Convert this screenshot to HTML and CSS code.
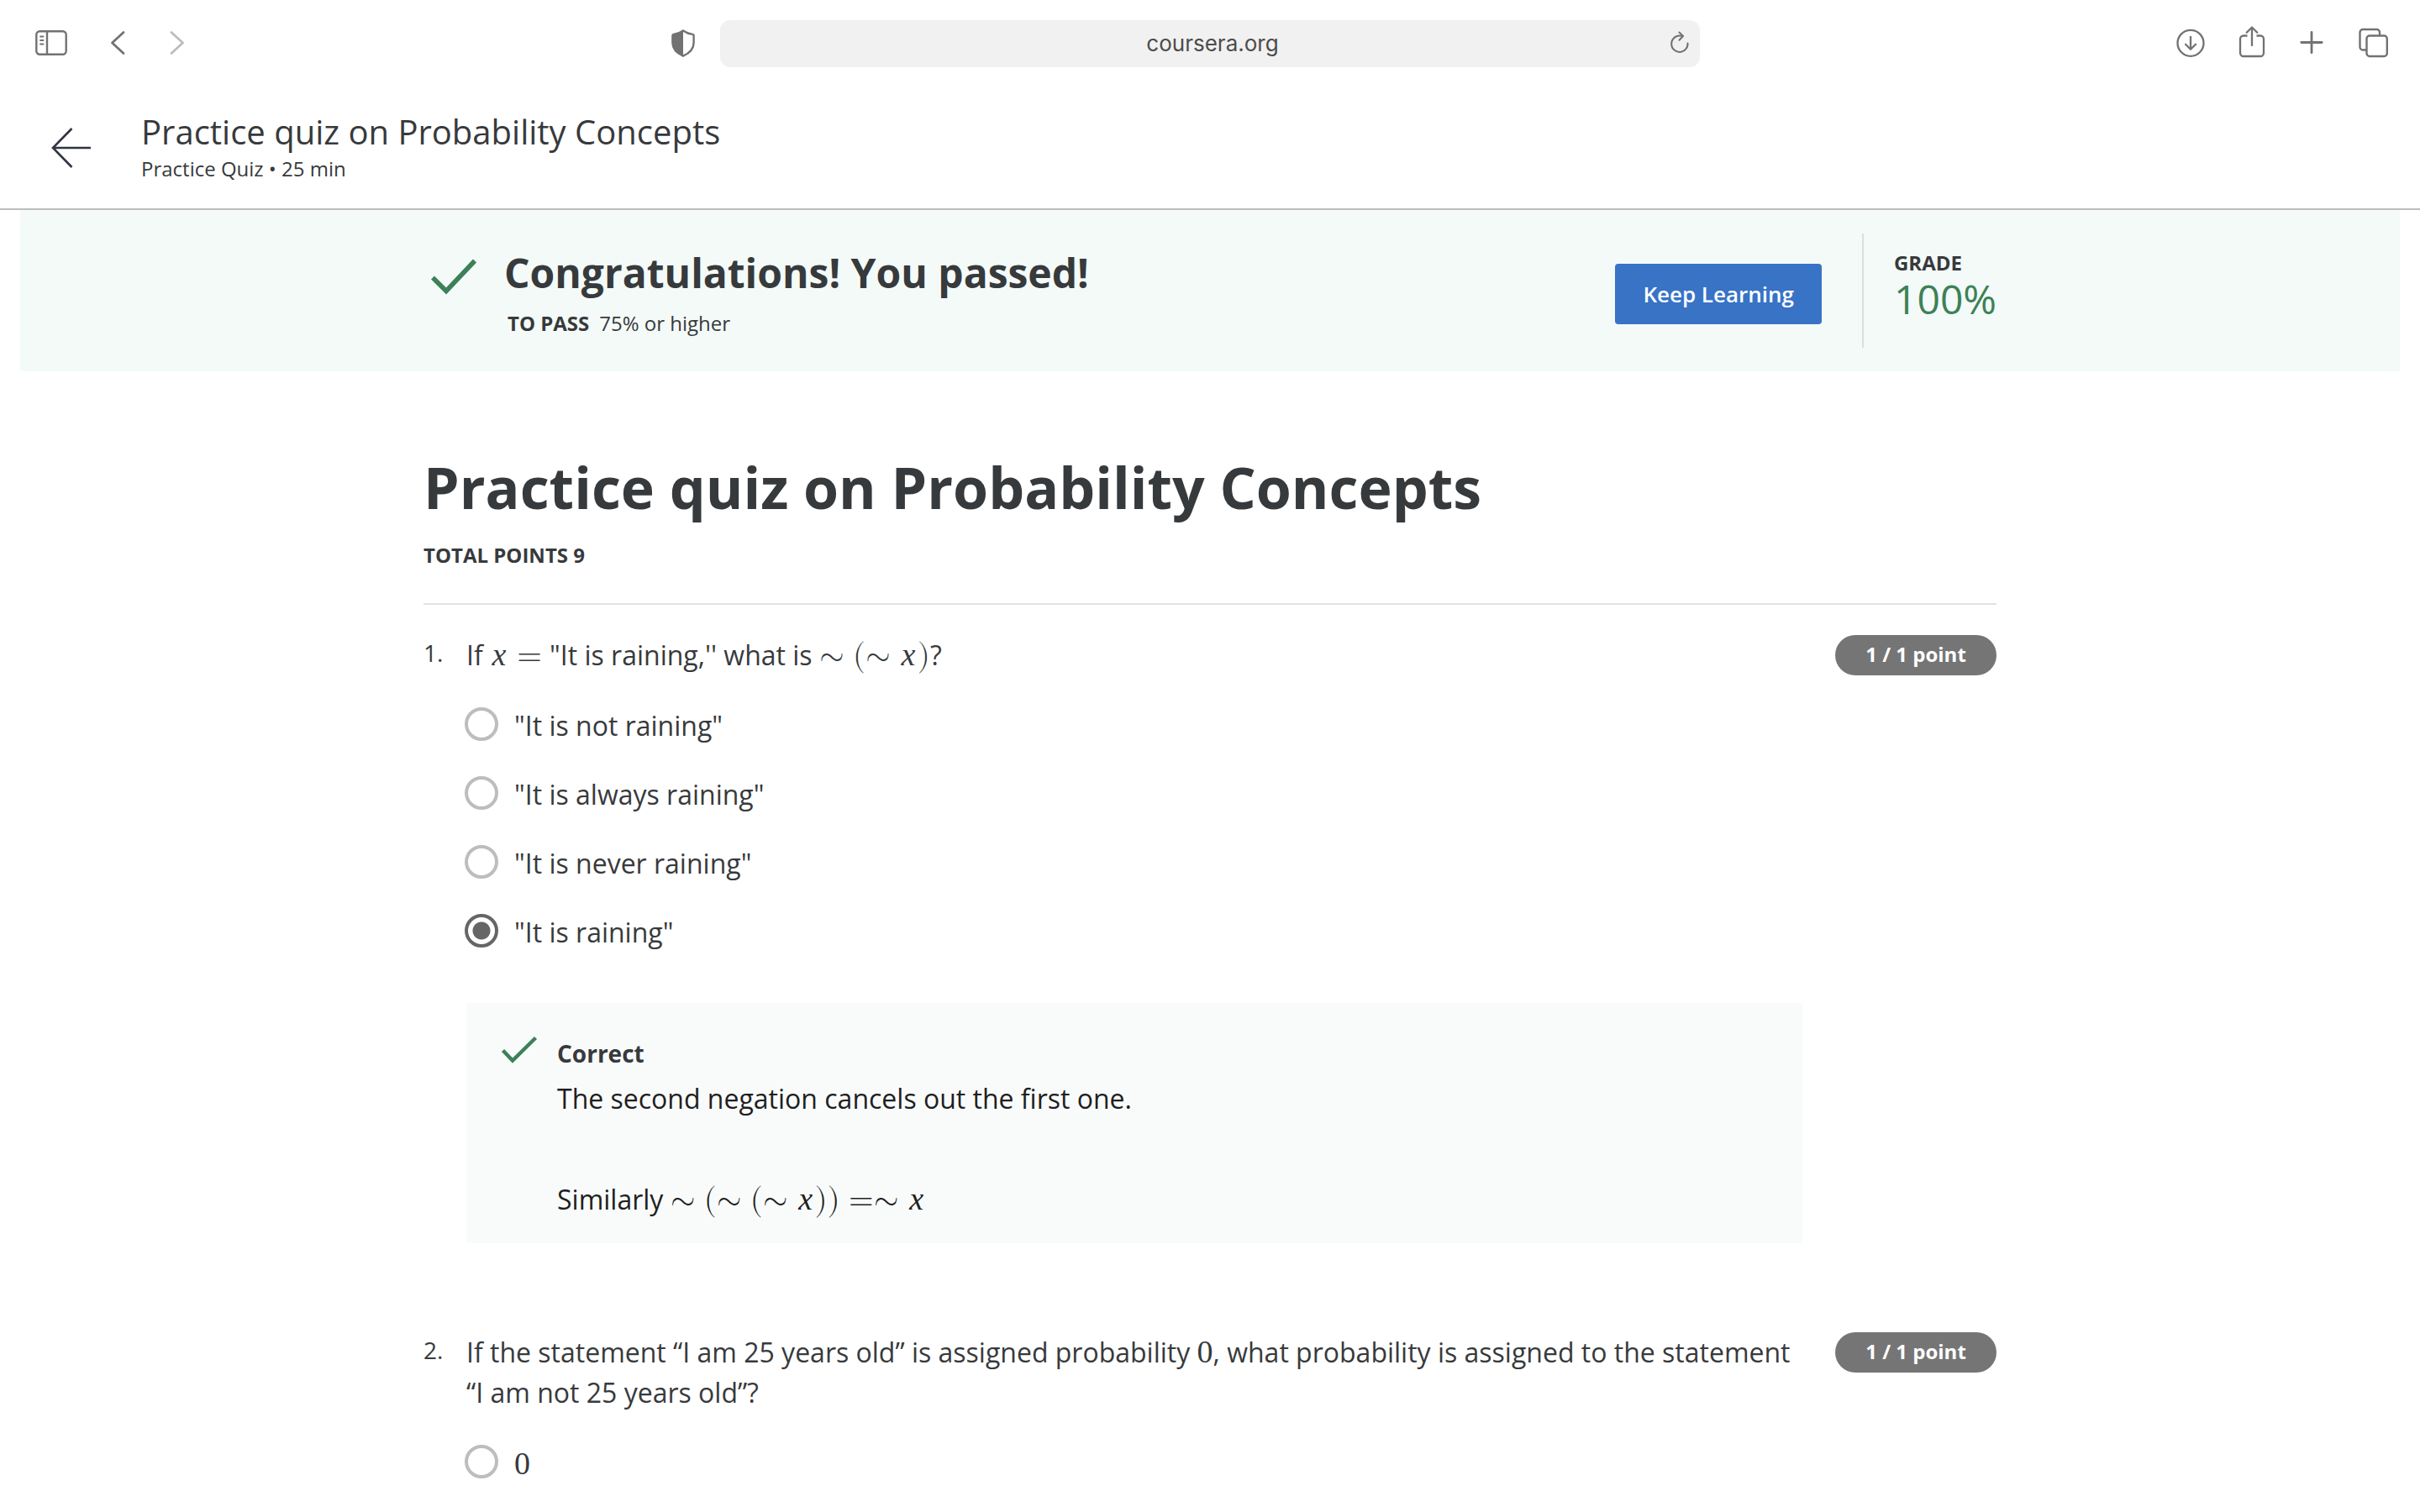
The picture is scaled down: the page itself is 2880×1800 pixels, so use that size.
FILE: index.html
```html
<!DOCTYPE html>
<html lang="en">
<head>
<meta charset="utf-8">
<title>Practice quiz on Probability Concepts</title>
<link rel="stylesheet" href="styles.css">
</head>
<body>
<div class="toolbar">
  <div class="toolbar-left">
    <button class="icon-button" type="button" aria-label="Show sidebar">
      <svg width="38" height="40" viewBox="0 0 38 40" fill="none" stroke="currentColor" stroke-width="2.4" stroke-linecap="round"><rect x="1.3" y="5.2" width="35.4" height="27.6" rx="4"/><path d="M14 5.5v27"/><path d="M6 11.5h3.5M6 16h3.5M6 20.5h3.5" stroke-width="1.8"/></svg>
    </button>
    <button class="icon-button" type="button" aria-label="Back">
      <svg width="20" height="40" viewBox="0 0 20 40" fill="none" stroke="currentColor" stroke-width="2.8" stroke-linecap="round" stroke-linejoin="round"><path d="M17 6.500 3.500 19 17 31.500"/></svg>
    </button>
    <button class="icon-button icon-disabled" type="button" aria-label="Forward" disabled>
      <svg width="20" height="40" viewBox="0 0 20 40" fill="none" stroke="currentColor" stroke-width="2.8" stroke-linecap="round" stroke-linejoin="round"><path d="M4 6.500 17.500 19 4 31.500"/></svg>
    </button>
    <button class="icon-button icon-shield" type="button" aria-label="Privacy report">
      <svg width="28" height="40" viewBox="0 0 28 40"><path d="M14 4.500C17.500 7 21.500 8.500 25.300 8.900c.9.100 1.300.7 1.300 1.500V19C26.600 26.500 21 31.500 14 34.700 7 31.500 1.400 26.500 1.400 19v-8.600c0-.8.400-1.400 1.300-1.500C6.500 8.500 10.500 7 14 4.500Z" fill="none" stroke="currentColor" stroke-width="2.4"/><path d="M14 4.500v30.200C7 31.500 1.400 26.500 1.400 19v-9.600C6.500 8.500 10.500 7 14 4.500Z" fill="currentColor"/></svg>
    </button>
  </div>
  <div class="address">
    <input class="address-input" type="text" value="coursera.org" aria-label="Address">
    <button class="icon-button address-reload" type="button" aria-label="Reload">
      <svg width="24" height="32" viewBox="0 0 24 32" fill="none" stroke="currentColor" stroke-width="2" stroke-linecap="round" stroke-linejoin="round"><path d="M21.500 15.500A9.700 9.700 0 1 1 11.800 6.500c1.500 0 2.800.1 4 .5"/><path d="M11.500 2.500 16 7l-4.500 4.700"/></svg>
    </button>
  </div>
  <div class="toolbar-right">
    <button class="icon-button" type="button" aria-label="Downloads">
      <svg width="34" height="40" viewBox="0 0 34 40" fill="none" stroke="currentColor" stroke-width="2.300" stroke-linecap="round" stroke-linejoin="round"><circle cx="17" cy="19.300" r="15.500"/><path d="M17 12v14.500M11 20.700l6 6 6-6"/></svg>
    </button>
    <button class="icon-button" type="button" aria-label="Share">
      <svg width="32" height="40" viewBox="0 0 32 40" fill="none" stroke="currentColor" stroke-width="2.300" stroke-linecap="round" stroke-linejoin="round"><path d="M10.500 10.500H6a4 4 0 0 0-4 4V31a4 4 0 0 0 4 4h20a4 4 0 0 0 4-4V14.500a4 4 0 0 0-4-4h-4.500" stroke-linecap="butt"/><path d="M16 22V1.500M9.700 6.800 16 .5l6.300 6.300"/></svg>
    </button>
    <button class="icon-button" type="button" aria-label="New tab">
      <svg width="30" height="40" viewBox="0 0 30 40" fill="none" stroke="currentColor" stroke-width="2.800" stroke-linecap="round"><path d="M2.800 18.500h24.400M15 6.300v24.400"/></svg>
    </button>
    <button class="icon-button" type="button" aria-label="Show tabs">
      <svg width="36" height="40" viewBox="0 0 36 40" fill="none" stroke="currentColor" stroke-width="2.400" stroke-linecap="round"><rect x="10.500" y="10.500" width="24.300" height="24.500" rx="3.500"/><path d="M10 27.500H6a3.500 3.500 0 0 1-3.500-3.500V6.500A3.500 3.500 0 0 1 6 3h16.500A3.500 3.500 0 0 1 26 6.500V10" stroke-linecap="butt"/></svg>
    </button>
  </div>
</div>

<header class="page-header">
  <a class="back-link" href="#" aria-label="Back to course">
    <svg width="48" height="48" viewBox="0 0 48 48" fill="none" stroke="currentColor" stroke-width="2.600" stroke-linejoin="miter"><path d="M24.500 1 2 24l22.500 23M2 24h45"/></svg>
  </a>
  <div>
    <div class="header-title">Practice quiz on Probability Concepts</div>
    <div class="header-meta">Practice Quiz • 25 min</div>
  </div>
</header>

<section class="banner">
  <div class="banner-inner">
    <svg class="banner-check" width="56" height="44" viewBox="0 0 56 44" fill="none" stroke="currentColor" stroke-width="5.600"><path d="M3 22.500 19 38.500 53 2.500"/></svg>
    <div class="banner-text">
      <h2 class="banner-title">Congratulations! You passed!</h2>
      <div class="banner-pass"><strong>TO PASS</strong><span>75% or higher</span></div>
    </div>
    <button class="keep-learning" type="button">Keep Learning</button>
    <div class="grade">
      <div class="grade-label">GRADE</div>
      <div class="grade-value">100%</div>
    </div>
  </div>
</section>

<main class="quiz">
  <h1 class="quiz-title">Practice quiz on Probability Concepts</h1>
  <div class="quiz-points">TOTAL POINTS 9</div>

  <section class="question">
    <div class="number">1.</div>
    <div class="question-body">
      <div class="prompt" id="q1">If <span class="math"><i class="var">x</i><span class="rel eq">=</span></span>"It is raining,'' what is <span class="math"><span class="rel">∼</span><span class="paren">(</span><span class="rel">∼</span><i class="var">x</i><span class="paren">)</span></span>?</div>
      <div class="options" role="radiogroup" aria-labelledby="q1">
        <label class="option"><input class="radio" type="radio" name="q1"><span>"It is not raining"</span></label>
        <label class="option"><input class="radio" type="radio" name="q1"><span>"It is always raining"</span></label>
        <label class="option"><input class="radio" type="radio" name="q1"><span>"It is never raining"</span></label>
        <label class="option"><input class="radio" type="radio" name="q1" checked><span>"It is raining"</span></label>
      </div>
      <div class="feedback">
        <svg class="feedback-check" width="44" height="36" viewBox="0 0 44 36" fill="none" stroke="currentColor" stroke-width="4.400"><path d="M2.500 16.500 14 28.500 41.500 1.500"/></svg>
        <div>
          <div class="feedback-title">Correct</div>
          <p class="feedback-text">The second negation cancels out the first one.</p>
          <p class="feedback-text">Similarly <span class="math"><span class="rel">∼</span><span class="paren">(</span><span class="rel">∼</span><span class="paren">(</span><span class="rel">∼</span><i class="var">x</i><span class="paren">)</span><span class="paren">)</span><span class="rel joined">=</span><span class="rel">∼</span><i class="var">x</i></span></p>
        </div>
      </div>
    </div>
    <div class="pill">1 / 1 point</div>
  </section>

  <section class="question">
    <div class="number">2.</div>
    <div class="question-body">
      <div class="prompt" id="q2">If the statement “I am 25 years old” is assigned probability <span class="math">0</span>, what probability is assigned to the statement “I am not 25 years old”?</div>
      <div class="options" role="radiogroup" aria-labelledby="q2">
        <label class="option"><input class="radio" type="radio" name="q2"><span class="math">0</span></label>
      </div>
    </div>
    <div class="pill">1 / 1 point</div>
  </section>
</main>
</body>
</html>
```
FILE: styles.css
```css
* { box-sizing: border-box; }

html { overflow: hidden; }

body {
  margin: 0;
  background: #fff;
  color: #373a3c;
  font-family: "Open Sans", "Liberation Sans", sans-serif;
  font-size: 32px;
  line-height: 48px;
}

svg { display: block; overflow: visible; }

/* Browser toolbar */
.toolbar {
  display: grid;
  grid-template-columns: 1fr minmax(0, 1166px) 1fr;
  align-items: center;
  padding: 24px 0;
}

.toolbar-left,
.toolbar-right { display: flex; align-items: center; }
.toolbar-left { gap: 50px; padding: 0 30px 0 42px; }
.toolbar-right { gap: 40px; justify-content: flex-end; padding-right: 38px; }

.icon-button {
  flex: none;
  padding: 0;
  border: 0;
  background: none;
  color: #727272;
}
.icon-disabled { color: #bcbcbc; }
.icon-shield { margin-left: auto; }

.address {
  display: flex;
  align-items: center;
  height: 56px;
  padding: 0 12px 0 42px;
  border-radius: 12px;
  background: #f1f1f1;
}
.address-input {
  flex: 1;
  min-width: 0;
  padding: 0;
  border: 0;
  background: none;
  color: #4c4c4c;
  font: 26px/34px Inter, "Liberation Sans", sans-serif;
  text-align: center;
}

/* Page header */
.page-header {
  display: flex;
  align-items: flex-start;
  gap: 59px;
  padding: 26px 61px 30px;
  border-bottom: 2px solid #bdbdbd;
}
.back-link { padding-top: 22px; color: #2f3640; }
.header-title { font-size: 40px; line-height: 54px; }
.header-meta { font-size: 24px; line-height: 34px; }

/* Result banner */
.banner { margin: 0 24px; padding: 28px 0; background: #f4faf8; }
.banner-inner {
  display: flex;
  align-items: center;
  max-width: 1872px;
  margin: 0 auto;
}
.banner-check { align-self: flex-start; margin: 30px 32px 0 8px; color: #3c8157; }
.banner-text { padding-top: 2px; }
.banner-title { margin: 0 0 10px; font-size: 48px; line-height: 66px; font-weight: 700; }
.banner-pass {
  display: flex;
  gap: 12px;
  padding-left: 4px;
  font-size: 24px;
  line-height: 34px;
}
.keep-learning {
  height: 72px;
  margin: 8px 48px 0 auto;
  padding: 0 33px;
  border: 0;
  border-radius: 4px;
  background: #3873c6;
  color: #fff;
  font: 600 26px/36px "Open Sans", "Liberation Sans", sans-serif;
}
.grade {
  align-self: stretch;
  min-height: 136px;
  padding: 18px 0 0 36px;
  border-left: 2px solid #dadfdd;
}
.grade-label { font-size: 24px; line-height: 34px; font-weight: 700; }
.grade-value { color: #3c8157; font-size: 48px; line-height: 52px; }

/* Quiz */
.quiz { max-width: 1872px; margin: 0 auto; padding-top: 92px; }
.quiz-title { margin: 0 0 18px; font-size: 68px; line-height: 92px; font-weight: 700; }
.quiz-points {
  padding-bottom: 40px;
  margin-bottom: 36px;
  border-bottom: 2px solid #e1e1e1;
  font-size: 24px;
  line-height: 34px;
  font-weight: 700;
}

.question {
  display: grid;
  grid-template-columns: 51px minmax(0, 1fr) 192px;
  align-items: start;
  margin-bottom: 106px;
}
.question-body { padding-right: 39px; }
.number { padding-top: 1px; font-size: 28px; line-height: 40px; }

.pill {
  padding-bottom: 2px;
  border-radius: 24px;
  background: #757575;
  color: #fff;
  font-size: 24px;
  line-height: 46px;
  font-weight: 700;
  text-align: center;
}

.options { display: grid; gap: 34px; margin: 36px 0 0 -2px; }
.option { display: flex; gap: 19px; align-items: flex-start; }
.radio {
  appearance: none;
  flex: none;
  width: 40px;
  height: 40px;
  margin: 2px 0 0;
  border: 4px solid #bdbdbd;
  border-radius: 50%;
}
.radio:checked {
  border-color: #666;
  background: radial-gradient(circle, #666 10px, transparent 11px);
}

.feedback {
  display: flex;
  margin-top: 60px;
  padding: 40px 40px 28px;
  gap: 23px;
  background: #f9fbfb;
}
.feedback-check { flex: none; margin-left: 1px; color: #3c8157; }
.feedback-title { margin-bottom: 10px; font-size: 28px; line-height: 40px; font-weight: 700; }
.feedback-text { margin: 0; color: #1f1f1f; }
.feedback-text + .feedback-text { margin-top: 72px; }

/* Inline formulas */
.math {
  font-family: "Liberation Serif", serif;
  font-size: 38px;
  line-height: 40px;
  white-space: nowrap;
}
.math > * { display: inline-block; line-height: 40px; text-align: center; }
.option .math { line-height: 48px; }
.var { width: 22px; }
.rel,
.paren { font-family: "Latin Modern Math", "DejaVu Math TeX Gyre", "Liberation Serif", serif; }
.rel { width: 30px; }
.rel + .paren,
.rel + .var,
.eq { margin-left: 10px; }
.eq { margin-right: 9px; }
.paren { width: 15px; }
.joined { margin-left: 10px; }
```
